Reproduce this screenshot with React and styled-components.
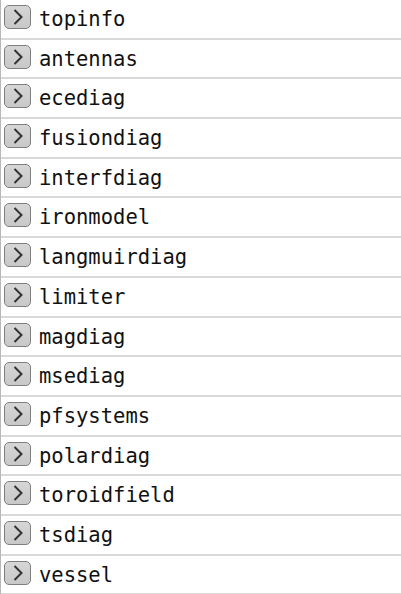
import React from "react";
import styled, { createGlobalStyle } from "styled-components";

const GlobalStyle = createGlobalStyle`
  body {
    margin: 0;
    background: #fff;
  }
`;

const List = styled.div`
  border-left: 1px solid #b8b8b8;
  width: 400px;
`;

const Row = styled.div`
  box-sizing: border-box;
  height: 39.7px;
  display: flex;
  align-items: flex-start;
  border-bottom: 2px solid #d9d9d9;
`;

const Toggle = styled.button`
  box-sizing: border-box;
  width: 27px;
  height: 24px;
  margin: 5px 0 0 3px;
  padding: 0;
  border: 1.5px solid #7f7f7f;
  border-radius: 5px;
  background: linear-gradient(#d6d6d6, #c8c8c8);
  display: flex;
  align-items: center;
  justify-content: center;
  cursor: pointer;
`;

const Label = styled.span`
  margin-left: 8px;
  font-family: "DejaVu Sans Mono", "Liberation Mono", monospace;
  font-size: 20.5px;
  line-height: 38px;
  color: #111;
`;

const Chevron = () => (
  <svg width="12" height="18" viewBox="0 0 12 18">
    <path d="M2.5 2 L9.5 9 L2.5 16" fill="none" stroke="#333" strokeWidth="2" />
  </svg>
);

const items = [
  "topinfo",
  "antennas",
  "ecediag",
  "fusiondiag",
  "interfdiag",
  "ironmodel",
  "langmuirdiag",
  "limiter",
  "magdiag",
  "msediag",
  "pfsystems",
  "polardiag",
  "toroidfield",
  "tsdiag",
  "vessel",
];

export default function App() {
  return (
    <>
      <GlobalStyle />
      <List>
        {items.map((name) => (
          <Row key={name}>
            <Toggle>
              <Chevron />
            </Toggle>
            <Label>{name}</Label>
          </Row>
        ))}
      </List>
    </>
  );
}
